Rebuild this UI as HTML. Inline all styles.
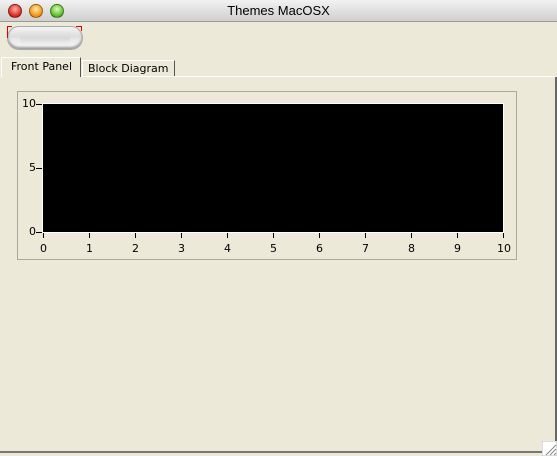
<!DOCTYPE html>
<html><head><meta charset="utf-8"><style>
*{margin:0;padding:0;box-sizing:border-box}
body{width:557px;height:456px;overflow:hidden;background:#ece9d8;font-family:"DejaVu Sans","Liberation Sans",sans-serif;position:relative}
.tb{position:absolute;left:0;top:0;width:557px;height:22px;background:linear-gradient(#f2f2f2,#cfcfcf);border-bottom:1px solid #9a9a9a;text-align:center;font:13px "Liberation Sans",sans-serif;line-height:22px;color:#000}
.b{position:absolute;top:4px;width:14px;height:14px;border-radius:50%;border:1px solid rgba(0,0,0,.35)}
.a{position:absolute;font-size:11px;color:#000}
</style></head><body>
<div class="tb">Themes MacOSX</div>
<div class="b" style="left:8px;background:radial-gradient(circle at 50% 35%,#ffb0a8,#d8241c 70%,#a0100a)"></div>
<div class="b" style="left:29px;background:radial-gradient(circle at 50% 35%,#ffe8a0,#f09010 70%,#b06000)"></div>
<div class="b" style="left:50px;background:radial-gradient(circle at 50% 35%,#d8ffb0,#58b828 70%,#307010)"></div>
<!-- pill -->
<div style="position:absolute;left:7px;top:26px;width:76px;height:24px;border-radius:12px;background:linear-gradient(#f4f4f4,#dcdcdc 45%,#e8e8e8 55%,#fafafa);border:1px solid #a8a8a8;box-shadow:inset 0 -2px 2px #999"></div>
<div style="position:absolute;left:20px;top:31px;width:50px;height:14px;background:linear-gradient(#e8e8e8,#d8d8d8 50%,#f2f2f2)"></div>
<div style="position:absolute;left:7px;top:26px;width:1px;height:12px;background:#d00"></div>
<div style="position:absolute;left:7px;top:26px;width:5px;height:1px;background:#d00"></div>
<div style="position:absolute;left:76px;top:26px;width:6px;height:1px;background:#d00"></div>
<div style="position:absolute;left:81px;top:26px;width:1px;height:5px;background:#d00"></div>
<!-- tabs -->
<div style="position:absolute;left:1px;top:76px;width:555px;height:1px;background:#fff"></div>
<div style="position:absolute;left:1px;top:57px;width:80px;height:20px;border-top:1px solid #fff;border-left:1px solid #fff;border-right:1px solid #555;background:#ece9d8;font-size:11px;line-height:18px;padding-left:9px">Front Panel</div>
<div style="position:absolute;left:82px;top:60px;width:93px;height:16px;border-top:1px solid #fff;border-left:1px solid #fff;border-right:1px solid #555;font-size:11px;line-height:16px;padding-left:5px">Block Diagram</div>
<div style="position:absolute;left:555px;top:77px;width:2px;height:376px;background:#666"></div>
<div style="position:absolute;left:0;top:451px;width:557px;height:2px;background:#777"></div>
<div style="position:absolute;left:0;top:453px;width:557px;height:3px;background:#ece9d8"></div>
<svg style="position:absolute;left:542px;top:441px" width="15" height="15"><rect x="0" y="0" width="15" height="15" fill="#fff" stroke="#bbb"/><path d="M4 14L14 4M8 14L14 8M12 14L14 12" stroke="#888"/></svg>
<!-- chart -->
<div style="position:absolute;left:17px;top:91px;width:500px;height:169px;border:1px solid #aaa8a0"></div>
<div style="position:absolute;left:42px;top:103px;width:462px;height:130px;background:#fff"></div>
<div style="position:absolute;left:43px;top:104px;width:460px;height:128px;background:#000"></div>
<svg style="position:absolute;left:0;top:0" width="557" height="456">
<g stroke="#000" stroke-width="1">
<path d="M36 104.5H42M36 168.5H42M36 232.5H42"/>
<path d="M43.5 233V238M89.5 233V238M135.5 233V238M181.5 233V238M227.5 233V238M273.5 233V238M319.5 233V238M365.5 233V238M411.5 233V238M457.5 233V238M503.5 233V238"/>
</g></svg>
<div class="a" style="left:22px;top:97px">10</div>
<div class="a" style="left:29px;top:161px">5</div>
<div class="a" style="left:29px;top:225px">0</div>
<div class="a" style="left:40px;top:242px">0</div>
<div class="a" style="left:86px;top:242px">1</div>
<div class="a" style="left:132px;top:242px">2</div>
<div class="a" style="left:178px;top:242px">3</div>
<div class="a" style="left:224px;top:242px">4</div>
<div class="a" style="left:270px;top:242px">5</div>
<div class="a" style="left:316px;top:242px">6</div>
<div class="a" style="left:362px;top:242px">7</div>
<div class="a" style="left:408px;top:242px">8</div>
<div class="a" style="left:454px;top:242px">9</div>
<div class="a" style="left:497px;top:242px">10</div>
</body></html>
